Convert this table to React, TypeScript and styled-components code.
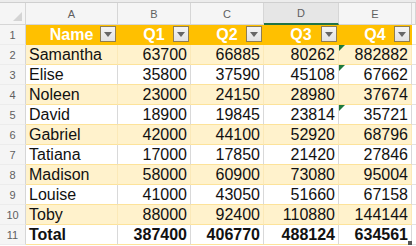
import React from 'react';
import styled, { createGlobalStyle, css } from 'styled-components';

const GlobalStyle = createGlobalStyle`
  body {
    margin: 0;
    background: #fff;
    font-family: 'Liberation Sans', Arial, sans-serif;
  }
`;

const COLS = '26px 92px 73px 73px 75px 73px 1fr';

const Sheet = styled.div`
  width: 416px;
  height: 246px;
  overflow: hidden;
  border-top: 2px solid #ececec;
`;

const HeaderRow = styled.div`
  display: grid;
  grid-template-columns: ${COLS};
  height: 23px;
  border-top: 1px solid #cfcfcf;
  box-sizing: border-box;
`;

const ColHead = styled.div<{ $active?: boolean }>`
  box-sizing: border-box;
  display: flex;
  align-items: center;
  justify-content: center;
  font-size: 11px;
  color: #5f5f5f;
  background: ${(p) => (p.$active ? '#e6e6e6' : '#f5f5f5')};
  border-right: 1px solid #d6d6d6;
  border-bottom: ${(p) => (p.$active ? '2px solid #217346' : '1px solid #d6d6d6')};
`;

const Corner = styled.div`
  position: relative;
  box-sizing: border-box;
  background: #f5f5f5;
  border-right: 1px solid #d6d6d6;
  border-bottom: 1px solid #d6d6d6;

  &::after {
    content: '';
    position: absolute;
    right: 3px;
    bottom: 3px;
    width: 0;
    height: 0;
    border-left: 9px solid transparent;
    border-bottom: 9px solid #d4d4d4;
  }
`;

const Row = styled.div`
  display: grid;
  grid-template-columns: ${COLS};
  height: 20px;
`;

const RowNum = styled.div`
  box-sizing: border-box;
  display: flex;
  align-items: center;
  justify-content: center;
  font-size: 11px;
  color: #5f5f5f;
  background: #f5f5f5;
  border-right: 1px solid #d6d6d6;
  border-bottom: 1px solid #ececec;
`;

type Kind = 'head' | 'band' | 'plain';

const Cell = styled.div<{ $kind: Kind; $num?: boolean; $bold?: boolean }>`
  position: relative;
  box-sizing: border-box;
  display: flex;
  align-items: center;
  padding: 0 3px;
  font-size: 16px;
  line-height: 19px;
  color: #111;
  font-weight: ${(p) => (p.$bold ? 700 : 400)};
  justify-content: ${(p) => (p.$num ? 'flex-end' : 'flex-start')};
  white-space: nowrap;
  ${(p) =>
    p.$kind === 'head' &&
    css`
      background: #ffc000;
      color: #fff;
      font-weight: 700;
      justify-content: center;
      border-right: 1px solid #ffc000;
      border-bottom: 1px solid #ffc000;
    `}
  ${(p) =>
    p.$kind === 'band' &&
    css`
      background: #fff2cc;
      border-right: 1px solid #fbe9b8;
      border-bottom: 1px solid #fde39a;
    `}
  ${(p) =>
    p.$kind === 'plain' &&
    css`
      background: #fff;
      border-right: 1px solid #d9d9d9;
      border-bottom: 1px solid #fde39a;
    `}
`;

const Blank = styled.div`
  box-sizing: border-box;
  background: #fff;
  border-bottom: 1px solid #e2e2e2;
`;

const Filter = styled.span`
  position: absolute;
  right: 1px;
  top: 1px;
  width: 16px;
  height: 16px;
  box-sizing: border-box;
  border: 1px solid #8f7e52;
  background: linear-gradient(#f4f4f4, #e2e2e2);
  display: flex;
  align-items: center;
  justify-content: center;

  &::after {
    content: '';
    width: 0;
    height: 0;
    border-left: 4px solid transparent;
    border-right: 4px solid transparent;
    border-top: 5px solid #666;
    margin-top: 1px;
  }
`;

const ErrorFlag = styled.span`
  position: absolute;
  left: 0;
  top: 0;
  width: 0;
  height: 0;
  border-top: 6px solid #1e7a3c;
  border-right: 6px solid transparent;
`;

const FillHandle = styled.span`
  position: absolute;
  right: -1px;
  bottom: -1px;
  width: 4px;
  height: 4px;
  background: #555;
`;

const data: [string, number, number, number, number, boolean][] = [
  ['Samantha', 63700, 66885, 80262, 882882, true],
  ['Elise', 35800, 37590, 45108, 67662, true],
  ['Noleen', 23000, 24150, 28980, 37674, false],
  ['David', 18900, 19845, 23814, 35721, true],
  ['Gabriel', 42000, 44100, 52920, 68796, false],
  ['Tatiana', 17000, 17850, 21420, 27846, false],
  ['Madison', 58000, 60900, 73080, 95004, false],
  ['Louise', 41000, 43050, 51660, 67158, false],
  ['Toby', 88000, 92400, 110880, 144144, false],
];

const totals = [387400, 406770, 488124, 634561];

const App: React.FC = () => {
  return (
    <>
      <GlobalStyle />
      <Sheet>
        <HeaderRow>
          <Corner />
          <ColHead>A</ColHead>
          <ColHead>B</ColHead>
          <ColHead>C</ColHead>
          <ColHead $active>D</ColHead>
          <ColHead>E</ColHead>
          <ColHead />
        </HeaderRow>

        <Row>
          <RowNum>1</RowNum>
          {['Name', 'Q1', 'Q2', 'Q3', 'Q4'].map((h) => (
            <Cell key={h} $kind="head">
              {h}
              <Filter />
            </Cell>
          ))}
          <Blank />
        </Row>

        {data.map(([name, q1, q2, q3, q4, flag], i) => {
          const kind: Kind = i % 2 === 0 ? 'band' : 'plain';
          return (
            <Row key={name}>
              <RowNum>{i + 2}</RowNum>
              <Cell $kind={kind}>{name}</Cell>
              <Cell $kind={kind} $num>{q1}</Cell>
              <Cell $kind={kind} $num>{q2}</Cell>
              <Cell $kind={kind} $num>{q3}</Cell>
              <Cell $kind={kind} $num>
                {flag && <ErrorFlag />}
                {q4}
              </Cell>
              <Blank />
            </Row>
          );
        })}

        <Row>
          <RowNum>11</RowNum>
          <Cell $kind="plain" $bold>Total</Cell>
          {totals.map((t, i) => (
            <Cell key={t} $kind="plain" $num $bold>
              {t}
              {i === 3 && <FillHandle />}
            </Cell>
          ))}
          <Blank />
        </Row>
      </Sheet>
    </>
  );
};

export default App;
